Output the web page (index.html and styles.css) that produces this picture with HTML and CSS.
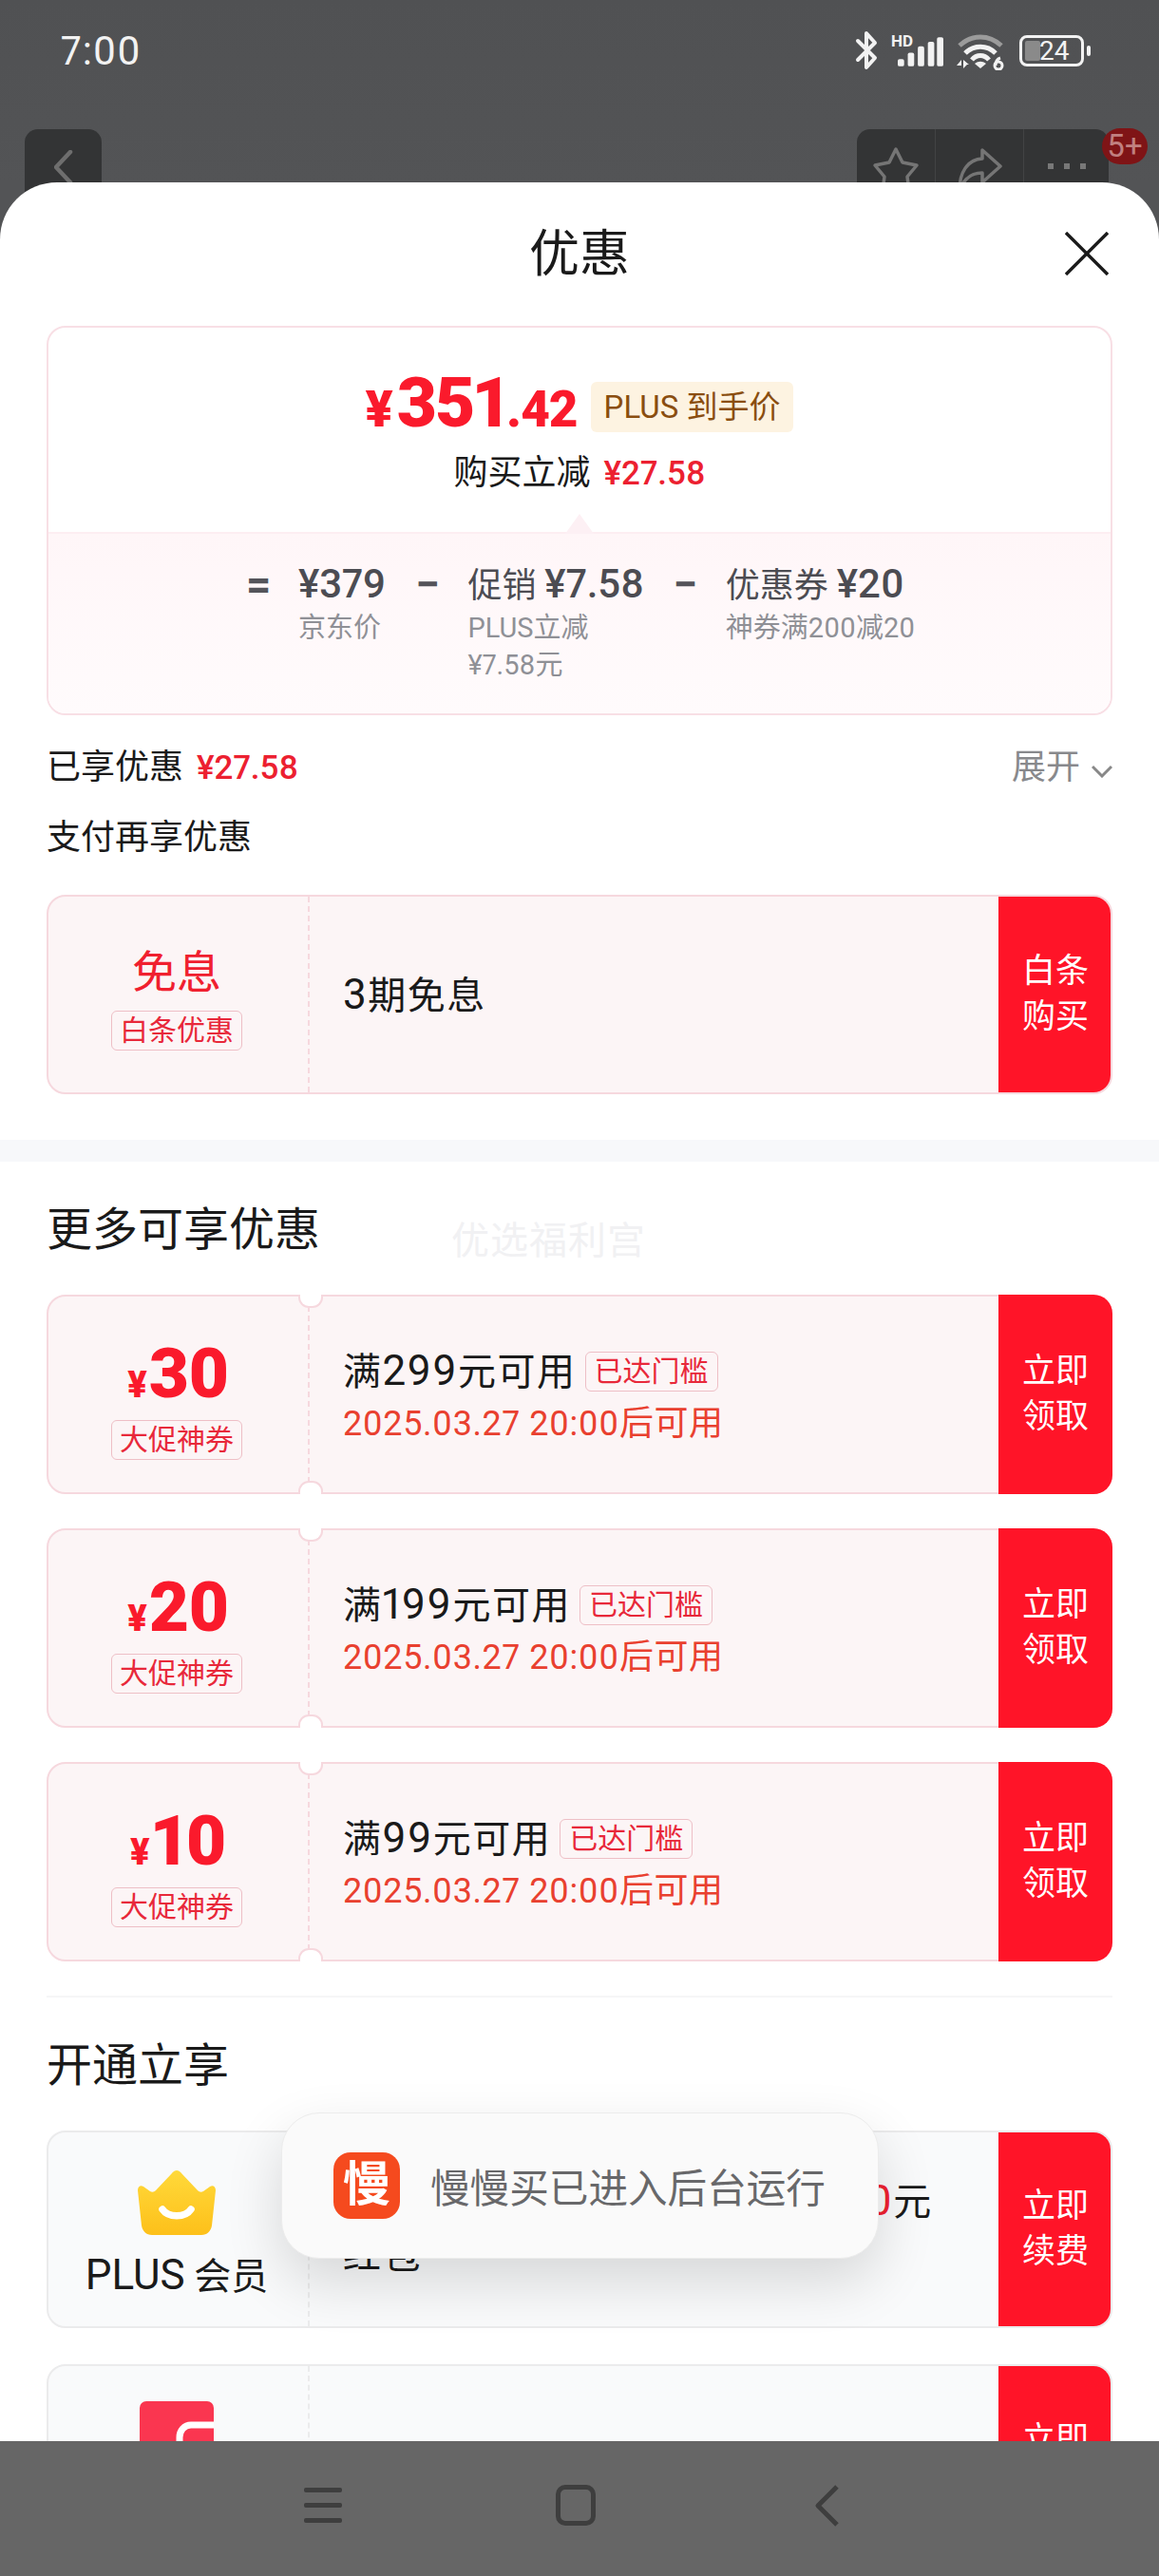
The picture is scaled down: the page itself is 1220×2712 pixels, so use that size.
FILE: index.html
```html
<!DOCTYPE html>
<html lang="zh-CN">
<head>
<meta charset="utf-8">
<title>优惠</title>
<link rel="stylesheet" href="styles.css">
</head>
<body>
<div class="screen">
  <header class="backdrop">
    <div class="status">
      <span class="clock">7:00</span>
      <div class="status-icons">
        <svg class="ic-bt" viewBox="0 0 26 42"><path d="M3 11 21 29 12 39V3l9 10L3 31" fill="none" stroke="#f2f2f2" stroke-width="4" stroke-linejoin="round" stroke-linecap="round"/></svg>
        <div class="signal">
          <span class="hd">HD</span>
          <svg class="ic-sig" viewBox="0 0 50 32"><g fill="#f2f2f2"><rect x="0" y="24" width="7" height="8" rx="2"/><rect x="11" y="17" width="7" height="15" rx="2"/><rect x="22" y="10" width="7" height="22" rx="2"/><rect x="33" y="5" width="7" height="27" rx="2"/><rect x="43" y="0" width="7" height="32" rx="2"/></g></svg>
        </div>
        <svg class="ic-wifi" viewBox="0 0 52 38"><path d="M4 12C17 0 35 0 48 12" fill="none" stroke="#9b9b9b" stroke-width="5"/><path d="M10 20C19 11 33 11 42 20M17 27C22 21 30 21 35 27" fill="none" stroke="#f2f2f2" stroke-width="5"/><path d="M20 31c4-3 8-3 12 0l-6 5z" fill="#f2f2f2"/><path d="M1 33h5v-6zM8 27v9l4-4h2z" fill="#f2f2f2"/><circle cx="45" cy="33" r="4" fill="none" stroke="#f2f2f2" stroke-width="3"/><path d="M42 33c0-4 2-7 5-8" fill="none" stroke="#f2f2f2" stroke-width="3"/></svg>
        <div class="battery"><i class="batt-fill"></i><span>24</span></div>
        <i class="batt-nub"></i>
      </div>
    </div>
    <div class="appbar">
      <div class="capsule back"><svg class="ic-back" viewBox="0 0 20 36"><path d="M17 2 2 18l15 16" fill="none" stroke="#6e6e6e" stroke-width="4.5" stroke-linecap="round" stroke-linejoin="round"/></svg></div>
      <div class="capsule actions">
        <div class="act"><svg class="ic-star" viewBox="0 0 50 50"><path d="M25 3l7 14 15 3-10 12 2 15-14-7-14 7 2-15L3 20l15-3z" fill="none" stroke="#757575" stroke-width="3.5" stroke-linejoin="round"/></svg></div>
        <div class="act"><svg class="ic-share" viewBox="0 0 50 50"><path d="M28 4 47 21 28 38V28C16 28 9 34 4 46 4 28 12 14 28 13z" fill="none" stroke="#757575" stroke-width="3.5" stroke-linejoin="round"/></svg></div>
        <div class="act dots"><i></i><i></i><i></i></div>
        <span class="badge">5+</span>
      </div>
    </div>
  </header>

  <main class="sheet">
    <div class="sheet-head">
      <span></span>
      <h1>优惠</h1>
      <svg class="ic-close" viewBox="0 0 46 46"><path d="M1 1 45 45M45 1 1 45" stroke="#1a1a1a" stroke-width="3.4" fill="none"/></svg>
    </div>

    <section class="group">
      <div class="summary">
        <div class="sum-top">
          <div class="price-row">
            <div class="price"><span class="yen">¥</span><span class="int">351</span><span class="dec">.42</span></div>
            <span class="plus-tag">PLUS 到手价</span>
          </div>
          <div class="save-row">购买立减<b>¥27.58</b></div>
          <i class="caret"></i>
        </div>
        <div class="sum-bottom">
          <span class="op">=</span>
          <div class="term"><div class="t-main"><span class="n">¥379</span></div><div class="t-sub">京东价</div></div>
          <span class="op">−</span>
          <div class="term"><div class="t-main">促销 <span class="n">¥7.58</span></div><div class="t-sub">PLUS立减<br>¥7.58元</div></div>
          <span class="op">−</span>
          <div class="term"><div class="t-main">优惠券 <span class="n">¥20</span></div><div class="t-sub">神券满200减20</div></div>
        </div>
      </div>

      <div class="line-row first">
        <div>已享优惠<b>¥27.58</b></div>
        <div class="expand">展开<svg class="ic-chev" viewBox="0 0 22 14"><path d="M1 2l10 10L21 2" fill="none" stroke="#888" stroke-width="3"/></svg></div>
      </div>
      <div class="line-row second">支付再享优惠</div>

      <div class="ticket solo">
        <div class="t-left">
          <div class="big-label">免息</div>
          <span class="t-tag">白条优惠</span>
        </div>
        <div class="t-mid"><div class="t-title"><span><span class="dg">3</span>期免息</span></div></div>
        <div class="t-btn">白条<br>购买</div>
      </div>
    </section>

    <div class="band"></div>

    <section class="group">
      <div class="sec-title">更多可享优惠<span class="watermark">优选福利宫</span></div>

      <div class="ticket notched">
        <div class="t-left">
          <div class="amount"><span class="a-yen">¥</span>30</div>
          <span class="t-tag">大促神券</span>
        </div>
        <div class="t-mid">
          <div class="t-title"><span>满<span class="dg">299</span>元可用</span><span class="reach">已达门槛</span></div>
          <div class="t-date">2025.03.27 20:00后可用</div>
        </div>
        <div class="t-btn">立即<br>领取</div>
      </div>

      <div class="ticket notched">
        <div class="t-left">
          <div class="amount"><span class="a-yen">¥</span>20</div>
          <span class="t-tag">大促神券</span>
        </div>
        <div class="t-mid">
          <div class="t-title"><span>满<span class="dg">199</span>元可用</span><span class="reach">已达门槛</span></div>
          <div class="t-date">2025.03.27 20:00后可用</div>
        </div>
        <div class="t-btn">立即<br>领取</div>
      </div>

      <div class="ticket notched">
        <div class="t-left">
          <div class="amount"><span class="a-yen">¥</span>10</div>
          <span class="t-tag">大促神券</span>
        </div>
        <div class="t-mid">
          <div class="t-title"><span>满<span class="dg">99</span>元可用</span><span class="reach">已达门槛</span></div>
          <div class="t-date">2025.03.27 20:00后可用</div>
        </div>
        <div class="t-btn">立即<br>领取</div>
      </div>

      <div class="hair"></div>
      <div class="sec-title">开通立享</div>

      <div class="ticket grey">
        <div class="t-left">
          <svg class="ic-crown" viewBox="0 0 82 68">
            <defs><linearGradient id="cg" x1="0" y1="0" x2="0" y2="1"><stop offset="0" stop-color="#ffd93a"/><stop offset="1" stop-color="#fdc01a"/></linearGradient></defs>
            <path d="M36 3C39 -1 43 -1 46 3L63 21C65 23 67 23 69 22L76 17C79 15 82 17 82 21L78 58C77 64 73 68 67 68H15C9 68 5 64 4 58L0 21C0 17 3 15 6 17L13 22C15 23 17 23 19 21Z" fill="url(#cg)"/>
            <path d="M26 41C32 50 50 50 56 41" fill="none" stroke="#fff" stroke-width="7.5" stroke-linecap="round"/>
          </svg>
          <div class="vip-name"><span class="dg-vip">PLUS</span> 会员</div>
        </div>
        <div class="t-mid">
          <div class="t-title wrap">续费<span class="dg">PLUS</span>会员可得超值优惠<span class="dg hot">20</span>元<br>红包</div>
        </div>
        <div class="t-btn">立即<br>续费</div>
      </div>

      <div class="ticket grey">
        <div class="t-left">
          <svg class="ic-red" viewBox="0 0 78 78">
            <rect width="78" height="78" rx="7" fill="#fa3650"/>
            <path d="M78 25H54C47 25 42 31 42 38V78" fill="none" stroke="#fff" stroke-width="7"/>
          </svg>
        </div>
        <div class="t-mid"></div>
        <div class="t-btn">立即<br>开通</div>
      </div>
    </section>
  </main>

  <nav class="navbar">
    <div class="ic-menu"><i></i><i></i><i></i></div>
    <div class="ic-home"></div>
    <svg class="ic-nav-back" viewBox="0 0 26 44"><path d="M24 2 4 22l20 20" fill="none" stroke="#3e3e3e" stroke-width="5" stroke-linejoin="round"/></svg>
  </nav>

  <div class="toast">
    <div class="toast-logo">慢</div>
    <span>慢慢买已进入后台运行</span>
  </div>
</div>
</body>
</html>
```
FILE: styles.css
```css
* { box-sizing: border-box; margin: 0; padding: 0; }
html, body { width: 1220px; height: 2712px; overflow: hidden; }
body { font-family: Roboto, "Noto Sans CJK SC", sans-serif; font-variant-numeric: proportional-nums; color: #1a1a1a; background: #fff; }
i { display: block; }

.screen { position: relative; width: 1220px; height: 2712px; overflow: hidden; display: flex; flex-direction: column; background: #535456; }

/* dimmed page behind the sheet */
.backdrop { height: 192px; flex: none; background: linear-gradient(#505153, #535456); }
.status { height: 136px; padding: 31px 72px 0 64px; display: flex; justify-content: space-between; align-items: flex-start; }
.clock { font-size: 42px; line-height: 46px; color: #f2f2f2; letter-spacing: 1px; }
.status-icons { display: flex; align-items: flex-start; }
.ic-bt { width: 26px; height: 42px; margin-top: 1px; }
.signal { position: relative; width: 56px; height: 40px; margin-left: 12px; }
.hd { position: absolute; left: 0; top: 5px; font-size: 17px; line-height: 15px; font-weight: 700; color: #f2f2f2; }
.ic-sig { position: absolute; left: 7px; top: 8px; width: 48px; height: 31px; }
.ic-wifi { width: 52px; height: 38px; margin: 5px 0 0 12px; }
.battery { position: relative; width: 68px; height: 33px; margin: 6px 0 0 15px; border: 3px solid #f2f2f2; border-radius: 8px; font-size: 28px; line-height: 27px; color: #f2f2f2; padding-left: 18px; }
.battery span { position: relative; }
.batt-fill { position: absolute; left: 3px; top: 3px; width: 16px; height: 21px; background: #8a8a8a; border-radius: 2px; }
.batt-nub { width: 4px; height: 11px; margin: 17px 0 0 3px; background: #f2f2f2; border-radius: 2px; }

.appbar { display: flex; justify-content: space-between; padding: 0 53px 0 26px; }
.capsule { height: 90px; background: #333435; border-radius: 14px; }
.back { width: 81px; display: flex; justify-content: center; padding-top: 22px; }
.ic-back { width: 20px; height: 36px; }
.actions { position: relative; display: flex; width: 265px; }
.act { display: flex; justify-content: center; padding-top: 18px; border-right: 1px solid #424344; }
.act:nth-child(1) { width: 83px; }
.act:nth-child(2) { width: 93px; }
.ic-star, .ic-share { width: 50px; height: 50px; }
.dots { flex: 1; border-right: 0; gap: 11px; padding-top: 36px; }
.dots i { width: 6px; height: 6px; background: #787878; }
.badge { position: absolute; left: 258px; top: -1px; width: 48px; height: 38px; border-radius: 19px; background: #7f1416; color: #c08080; font-size: 33px; line-height: 38px; text-align: center; }

/* sheet */
.sheet { position: relative; z-index: 1; flex: 1; min-height: 0; overflow: hidden; background: #fff; border-radius: 60px 60px 0 0; }
.sheet-head { height: 151px; display: grid; grid-template-columns: 1fr auto 1fr; align-items: start; padding: 45px 53px 0; }
.sheet-head h1 { font-size: 53px; line-height: 62px; font-weight: 400; }
.ic-close { justify-self: end; width: 46px; height: 46px; margin-top: 7px; }

.group { padding: 0 49px; }

.summary { height: 410px; border: 2px solid #f8dfe5; border-radius: 20px; overflow: hidden; }
.sum-top { position: relative; height: 217px; padding-top: 40px; border-bottom: 2px solid #fdeef2; }
.price-row { height: 86px; display: flex; justify-content: center; align-items: center; gap: 14px; }
.price { padding-top: 11px; color: #fa1a2c; font-weight: 900; white-space: nowrap; line-height: 75px; }
.yen { font-size: 54px; margin-right: 4px; }
.int { font-size: 73px; letter-spacing: -2px; }
.dec { font-size: 53px; letter-spacing: -1px; }
.plus-tag { height: 53px; padding: 0 14px; background: #fdf3e1; border-radius: 6px; color: #8a4e10; font-size: 33px; line-height: 53px; white-space: nowrap; }
.save-row { height: 48px; margin-top: 3px; line-height: 48px; text-align: center; font-size: 36px; }
.save-row b, .line-row b { margin-left: 14px; color: #ec2030; font-weight: 500; font-size: 35px; }
.caret { position: absolute; left: 544px; bottom: -2px; width: 0; height: 0; border-left: 15px solid transparent; border-right: 15px solid transparent; border-bottom: 21px solid #fdf0f4; }

.sum-bottom { height: 189px; padding: 30px 0 0 2px; display: flex; justify-content: center; align-items: flex-start; gap: 31px; background: linear-gradient(#fff6f8, #fffbfc); }
.op { width: 24px; font-size: 46px; line-height: 46px; color: #54545a; font-weight: 700; text-align: center; }
.t-main { font-size: 36px; line-height: 46px; color: #4c4c52; white-space: nowrap; }
.t-main .n { font-size: 42px; font-weight: 500; }
.t-sub { margin-top: 2px; font-size: 29px; line-height: 39px; color: #8f9096; white-space: nowrap; }

.line-row { height: 44px; line-height: 44px; font-size: 36px; }
.line-row.first { margin-top: 33px; display: flex; justify-content: space-between; }
.line-row.second { margin-top: 30px; }
.expand { display: flex; align-items: center; gap: 12px; color: #88898c; }
.ic-chev { width: 22px; height: 14px; margin-top: 8px; }

/* tickets */
.ticket { position: relative; height: 210px; margin-top: 36px; display: flex; border: 2px solid #f6d8de; border-radius: 20px; background: #fcf5f6; overflow: hidden; }
.solo { margin-top: 38px; }
.t-left { flex: none; width: 275px; padding-right: 3px; border-right: 2px dashed #f6d8de; display: flex; flex-direction: column; align-items: center; }
.t-mid { flex: 1; min-width: 0; padding: 2px 0 0 35px; display: flex; flex-direction: column; justify-content: center; }
.t-btn { flex: none; width: 120px; margin: -2px -2px -2px 0; background: #ff1428; color: #fff; font-size: 35px; line-height: 48px; display: flex; align-items: center; justify-content: center; text-align: center; }
.big-label { margin-top: 50px; font-size: 47px; line-height: 60px; color: #f0202f; }
.t-tag { width: 138px; height: 42px; margin-top: 10px; border: 1px solid #eebfc6; border-radius: 6px; color: #e8283a; font-size: 30px; line-height: 40px; text-align: center; }
.t-title { font-size: 40px; line-height: 54px; letter-spacing: 1.5px; white-space: nowrap; display: flex; align-items: center; }
.dg { font-size: 44px; }
.t-title.wrap { display: block; line-height: 56px; margin-top: -4px; }
.reach { width: 140px; height: 42px; margin-left: 9px; border: 1px solid #eebfc6; border-radius: 6px; color: #e8283a; font-size: 30px; line-height: 40px; letter-spacing: 0; text-align: center; }
.t-date { font-size: 36px; line-height: 48px; color: #e9402f; margin-top: 3px; letter-spacing: .6px; white-space: nowrap; }
.amount { margin-top: 39px; padding-left: 3px; height: 85px; color: #fa1a2c; font-size: 73px; line-height: 85px; letter-spacing: -1px; font-weight: 900; white-space: nowrap; }
.a-yen { font-size: 38px; margin-right: 3px; }
.notched .t-tag { margin-top: 6px; }

/* ticket notches lying over the border */
.notched { overflow: visible; }
.notched::before, .notched::after { content: ""; position: absolute; left: 263px; width: 22px; height: 12px; background: #fff; border: 2px solid #f6d8de; z-index: 1; }
.notched::before { top: -2px; border-top: 0; border-radius: 0 0 11px 11px; }
.notched::after { bottom: -2px; border-bottom: 0; border-radius: 11px 11px 0 0; }
.notched .t-btn { border-radius: 0 20px 20px 0; }

.grey { height: 208px; margin-top: 38px; border-color: #ebebec; background: #f9fafb; }
.grey .t-left { border-right-color: #ebebec; }
.ic-crown { width: 82px; height: 68px; margin-top: 40px; }
.vip-name { margin-top: 19px; font-size: 39px; line-height: 46px; white-space: nowrap; }
.dg-vip { font-size: 44px; }
.ic-red { width: 78px; height: 78px; margin-top: 37px; }
.hot { color: #f0202f; }

.band { height: 23px; margin-top: 48px; background: #f7f8fa; }
.sec-title { position: relative; height: 60px; margin-top: 42px; font-size: 48px; line-height: 60px; white-space: nowrap; }
.watermark { position: absolute; left: 426px; top: 18px; font-size: 40px; line-height: 48px; color: #f1f1f3; letter-spacing: 1px; }
.sec-title + .ticket { margin-top: 38px; }
.hair { height: 2px; margin-top: 36px; background: #f6f6f7; }

/* system nav */
.navbar { position: relative; z-index: 2; flex: none; height: 142px; background: #666; display: flex; align-items: flex-start; padding-left: 320px; }
.ic-menu { width: 40px; margin-top: 49px; display: flex; flex-direction: column; gap: 11px; }
.ic-menu i { height: 5px; background: #3e3e3e; border-radius: 2px; }
.ic-home { width: 42px; height: 43px; margin: 46px 0 0 225px; border: 5px solid #3e3e3e; border-radius: 10px; }
.ic-nav-back { width: 26px; height: 44px; margin: 46px 0 0 230px; }

/* toast */
.toast { position: absolute; z-index: 3; left: 296px; top: 2224px; width: 629px; height: 154px; padding-left: 54px; display: flex; align-items: center; gap: 32px; background: #fafafa; border: 1px solid #ececec; border-radius: 40px; box-shadow: 0 24px 60px rgba(0,0,0,.14); color: #68686a; font-size: 41.6px; white-space: nowrap; }
.toast-logo { width: 70px; height: 70px; border-radius: 18px; background: #f54a1e; color: #fff; font-size: 50px; line-height: 68px; text-align: center; font-weight: 700; }
```
